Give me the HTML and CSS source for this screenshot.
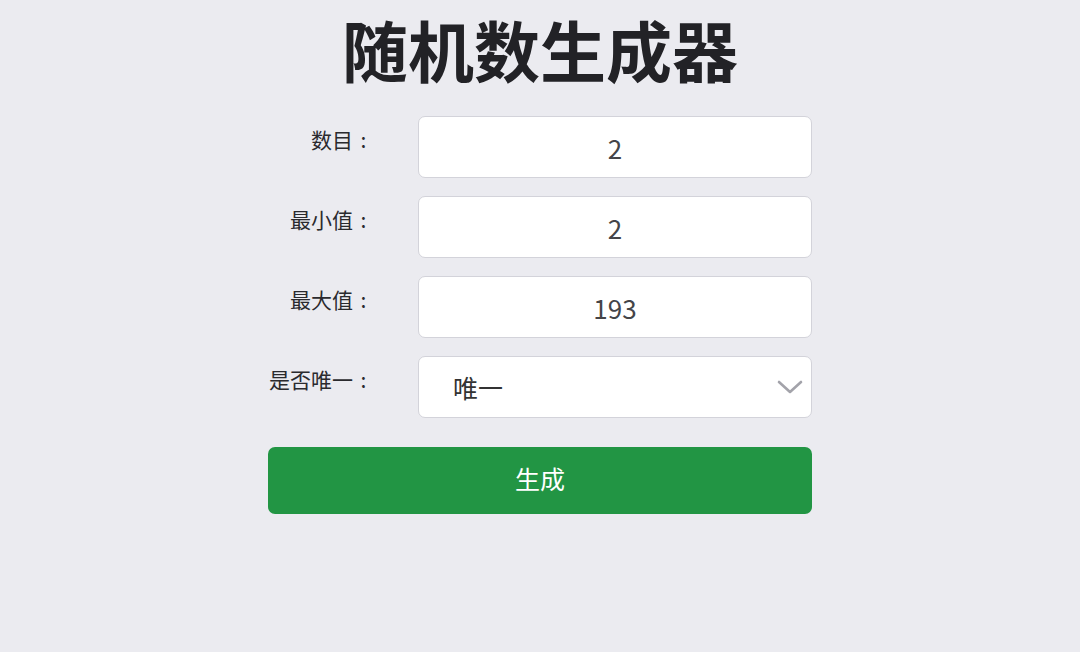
FILE: index.html
```html
<!DOCTYPE html>
<html lang="zh-CN">
<head>
<meta charset="utf-8">
<title>随机数生成器</title>
<link rel="stylesheet" href="styles.css">
</head>
<body>
<main class="app">
  <h1 class="title">随机数生成器</h1>
  <form class="form">
    <div class="row">
      <label class="label">数目<span class="colon">:</span></label>
      <div class="field">2</div>
    </div>
    <div class="row">
      <label class="label">最小值<span class="colon">:</span></label>
      <div class="field">2</div>
    </div>
    <div class="row">
      <label class="label">最大值<span class="colon">:</span></label>
      <div class="field">193</div>
    </div>
    <div class="row">
      <label class="label">是否唯一<span class="colon">:</span></label>
      <div class="field select">
        <span class="select-text">唯一</span>
        <svg class="chevron" width="26" height="16" viewBox="0 0 26 16"><path d="M2 3 L13 13 L24 3" fill="none" stroke="#a3a3aa" stroke-width="2.6" stroke-linecap="round" stroke-linejoin="round"/></svg>
      </div>
    </div>
    <button type="button" class="btn">生成</button>
  </form>
</main>
</body>
</html>
```
FILE: styles.css
```css
html, body {
  margin: 0;
  padding: 0;
  background: #ebebf0;
}
body {
  font-family: "Noto Sans CJK SC", "Noto Sans", sans-serif;
  color: #333;
}
.app {
  width: 544px;
  margin: 0 auto;
  display: flex;
  flex-direction: column;
  align-items: stretch;
}
.title {
  margin: 0;
  font-size: 66px;
  line-height: 96px;
  font-weight: 700;
  text-align: center;
  color: #222226;
  letter-spacing: 0;
}
.form {
  margin-top: 20px;
  display: flex;
  flex-direction: column;
  gap: 18px;
}
.row {
  display: grid;
  grid-template-columns: 150px 1fr;
  align-items: start;
}
.label {
  text-align: right;
  padding-right: 44px;
  padding-top: 9px;
  font-size: 21px;
  line-height: 28px;
  color: #2a2a2e;
}
.colon {
  display: inline-block;
  width: 21px;
  text-align: center;
}
.field {
  box-sizing: border-box;
  height: 62px;
  background: #fff;
  border: 1.5px solid #d3d3da;
  border-radius: 7px;
  display: flex;
  align-items: center;
  justify-content: center;
  font-size: 26px;
  color: #444448;
}
.select {
  justify-content: space-between;
  padding: 0 8px 0 34px;
}
.select-text {
  font-size: 25px;
  color: #333;
}
.chevron {
  display: block;
}
.btn {
  margin-top: 11px;
  height: 67px;
  padding: 0 0 5px;
  border: none;
  border-radius: 7px;
  background: #229544;
  color: #fff;
  font-family: inherit;
  font-size: 25px;
  cursor: pointer;
}
```
